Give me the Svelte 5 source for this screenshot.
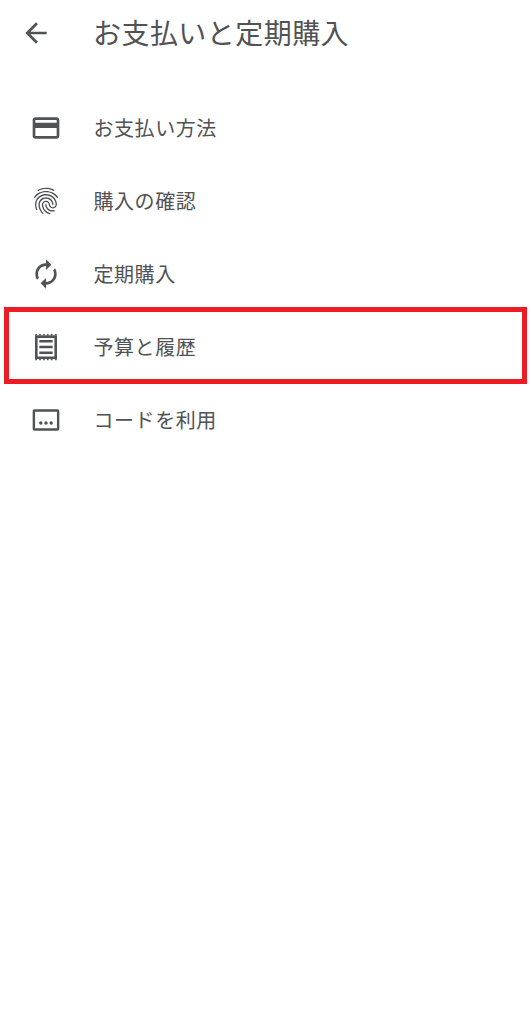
<script lang="ts">
  type Item = { id: string; label: string; paths: string[]; highlighted?: boolean };

  const items: Item[] = [
    {
      id: "card",
      label: "お支払い方法",
      paths: ["M20 4H4c-1.11 0-1.99.89-1.99 2L2 18c0 1.11.89 2 2 2h16c1.11 0 2-.89 2-2V6c0-1.11-.89-2-2-2zm0 14H4v-6h16v6zm0-10H4V6h16v2z"],
    },
    {
      id: "fingerprint",
      label: "購入の確認",
      paths: ["M17.81 4.47c-.08 0-.16-.02-.23-.06C15.66 3.42 14 3 12.01 3c-1.98 0-3.86.47-5.57 1.41-.24.13-.54.04-.68-.2-.13-.24-.04-.55.2-.68C7.82 2.52 9.86 2 12.01 2c2.13 0 3.99.47 6.03 1.52.25.13.34.43.21.67-.09.18-.26.28-.44.28zM3.5 9.72c-.1 0-.2-.03-.29-.09-.23-.16-.28-.47-.12-.7.99-1.4 2.25-2.5 3.75-3.27C9.98 4.04 14 4.03 17.15 5.65c1.5.77 2.76 1.86 3.75 3.25.16.22.11.54-.12.7-.23.16-.54.11-.7-.12-.9-1.26-2.04-2.25-3.39-2.94-2.87-1.47-6.54-1.47-9.4.01-1.36.7-2.5 1.7-3.4 2.96-.08.14-.23.21-.39.21zm6.25 12.07c-.13 0-.26-.05-.35-.15-.87-.87-1.34-1.43-2.01-2.64-.69-1.23-1.05-2.73-1.05-4.34 0-2.97 2.54-5.39 5.66-5.39s5.66 2.42 5.66 5.39c0 .28-.22.5-.5.5s-.5-.22-.5-.5c0-2.42-2.09-4.39-4.66-4.39-2.57 0-4.66 1.97-4.66 4.39 0 1.44.32 2.77.93 3.85.64 1.15 1.08 1.64 1.85 2.42.19.2.19.51 0 .71-.11.1-.24.15-.37.15zm7.17-1.85c-1.19 0-2.24-.3-3.1-.89-1.49-1.01-2.38-2.65-2.38-4.39 0-.28.22-.5.5-.5s.5.22.5.5c0 1.41.72 2.74 1.94 3.56.71.48 1.54.71 2.54.71.24 0 .64-.03 1.04-.1.27-.05.53.13.58.41.05.27-.13.53-.41.58-.57.11-1.07.12-1.21.12zM14.91 22c-.04 0-.09-.01-.13-.02-1.59-.44-2.63-1.03-3.72-2.1-1.4-1.39-2.17-3.24-2.17-5.22 0-1.62 1.38-2.94 3.08-2.94 1.7 0 3.08 1.32 3.08 2.94 0 1.07.93 1.94 2.08 1.94s2.08-.87 2.08-1.94c0-3.77-3.25-6.83-7.25-6.83-2.84 0-5.44 1.58-6.61 4.03-.39.81-.59 1.76-.59 2.8 0 .78.07 2.01.67 3.61.1.26-.03.55-.29.64-.26.1-.55-.04-.64-.29-.49-1.31-.73-2.61-.73-3.96 0-1.2.23-2.29.68-3.24 1.33-2.79 4.28-4.6 7.51-4.6 4.55 0 8.25 3.51 8.25 7.83 0 1.62-1.38 2.94-3.08 2.94s-3.08-1.32-3.08-2.94c0-1.07-.93-1.94-2.08-1.94s-2.08.87-2.08 1.94c0 1.71.66 3.31 1.87 4.51.95.94 1.86 1.46 3.27 1.85.27.07.42.35.35.61-.05.23-.26.38-.47.38z"],
    },
    {
      id: "renew",
      label: "定期購入",
      paths: ["M12 6v3l4-4-4-4v3c-4.42 0-8 3.58-8 8 0 1.57.46 3.03 1.24 4.26L6.7 14.8c-.45-.83-.7-1.79-.7-2.8 0-3.31 2.69-6 6-6zm6.76 1.74L17.3 9.2c.44.84.7 1.79.7 2.8 0 3.31-2.69 6-6 6v-3l-4 4 4 4v-3c4.42 0 8-3.58 8-8 0-1.57-.46-3.03-1.24-4.26z"],
    },
    {
      id: "budget",
      label: "予算と履歴",
      highlighted: true,
      paths: [
        "M3.75 3.25H20.25V21H3.75zM5.7 5.2V19.05H18.3V5.2z",
        "M4 2.25h1.3v1h-1.3zM6.9 2.25h1.3v1h-1.3zM9.8 2.25h1.3v1h-1.3zM12.700 2.25h1.3v1h-1.3zM15.600 2.25h1.3v1h-1.3zM18.700 2.25h1.3v1h-1.3z",
        "M4 21h1.3v1h-1.3zM6.900 21h1.3v1h-1.3zM9.800 21h1.3v1h-1.3zM12.700 21h1.3v1h-1.3zM15.600 21h1.3v1h-1.3zM18.700 21h1.3v1h-1.3z",
        "M7 6.700h10v1.900H7zM7 11.100h10v1.900H7zM7 15.300h10v1.900H7z",
      ],
    },
    {
      id: "code",
      label: "コードを利用",
      paths: [
        "M20.500 4H3.500c-.8 0-1.500.7-1.500 1.500v13c0 .8.7 1.500 1.500 1.500h17c.8 0 1.500-.7 1.500-1.500v-13c0-.8-.7-1.500-1.500-1.500zm-.3 14.200H3.800V5.800h16.400v12.400z",
        "M6.800 14.250a1.300 1.300 0 1 0 2.600 0a1.300 1.300 0 1 0-2.600 0zM10.700 14.250a1.300 1.300 0 1 0 2.600 0a1.300 1.300 0 1 0-2.600 0zM14.600 14.250a1.300 1.300 0 1 0 2.600 0a1.300 1.300 0 1 0-2.600 0z",
      ],
    },
  ];
</script>

<main class="page">
  <header class="topbar">
    <button type="button" class="back" aria-label="戻る">
      <svg viewBox="0 0 24 24" width="32" height="32">
        <path d="M20 11H7.830l5.590-5.590L12 4l-8 8 8 8 1.410-1.410L7.830 13H20v-2z" />
      </svg>
    </button>
    <h1 class="title">お支払いと定期購入</h1>
  </header>

  <ul class="menu">
    {#each items as item (item.id)}
      <li class="row">
        <svg class="row-icon" viewBox="0 0 24 24" width="32" height="32">
          {#each item.paths as d}
            <path {d} fill-rule="evenodd" />
          {/each}
        </svg>
        <span class="row-label">{item.label}</span>
        {#if item.highlighted}
          <span class="highlight"></span>
        {/if}
      </li>
    {/each}
  </ul>
</main>

<style>
  :global(body) {
    background: #fff;
  }

  .page {
    height: 1024px;
    background: #fff;
    color: #505254;
    font-family: "Noto Sans CJK JP", "Noto Sans", sans-serif;
    overflow: hidden;
  }

  .topbar {
    display: flex;
    align-items: center;
    gap: 41px;
    height: 66px;
    padding-left: 20px;
    margin-bottom: 25px;
  }

  .back {
    display: flex;
    border: none;
    background: none;
    padding: 0;
  }

  .back svg {
    fill: #505254;
  }

  .title {
    margin: 0 0 3px;
    font-size: 28px;
    font-weight: 400;
    letter-spacing: 0.45px;
    white-space: nowrap;
  }

  .menu {
    list-style: none;
    margin: 0;
    padding: 0;
  }

  .row {
    position: relative;
    display: flex;
    align-items: center;
    gap: 32px;
    height: 73px;
    padding-left: 30px;
  }

  .row-icon {
    flex-shrink: 0;
    fill: #505254;
  }

  .row-label {
    font-size: 20px;
    letter-spacing: 0.55px;
    white-space: nowrap;
    margin-left: -0.5px;
  }

  .highlight {
    position: absolute;
    left: 4px;
    top: -3px;
    width: 523px;
    height: 77px;
    box-sizing: border-box;
    border: 5px solid #ed1c24;
  }
</style>
